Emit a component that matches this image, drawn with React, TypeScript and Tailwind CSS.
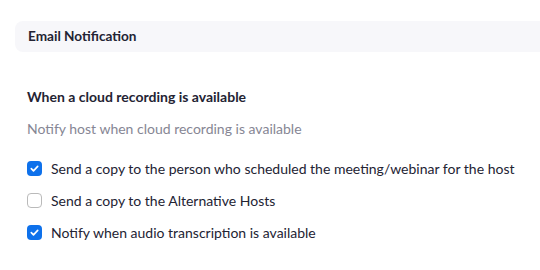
import React from "react";

type Option = { label: string; checked: boolean };

const OPTIONS: Option[] = [
  { label: "Send a copy to the person who scheduled the meeting/webinar for the host", checked: true },
  { label: "Send a copy to the Alternative Hosts", checked: false },
  { label: "Notify when audio transcription is available", checked: true },
];

function CheckBox({ checked }: { checked: boolean }) {
  if (!checked) {
    return <span className="h-[15px] w-[15px] shrink-0 rounded-[4px] border border-[#bababa] bg-white" />;
  }
  return (
    <span className="flex h-[15px] w-[15px] shrink-0 items-center justify-center rounded-[4px] bg-[#0e71eb]">
      <svg width="11" height="11" viewBox="0 0 12 12" fill="none">
        <path d="M2.5 6.2l2.4 2.4 4.6-4.9" stroke="white" strokeWidth="1.8" strokeLinecap="round" strokeLinejoin="round" />
      </svg>
    </span>
  );
}

export default function App() {
  return (
    <div className="h-[270px] w-[540px] overflow-hidden bg-white pt-[21px] text-[#232333]" style={{ fontFamily: "Lato, 'Open Sans', sans-serif" }}>
      {/* section header */}
      <div className="ml-[15px] flex h-[31px] items-center rounded-l-[8px] bg-[#f7f7fa] pl-[13px] text-[13.6px] font-bold">
        Email Notification
      </div>

      <div className="pl-[27px]">
        <h3 className="mt-[35px] text-[14px] font-bold leading-[20px]">When a cloud recording is available</h3>
        <p className="mt-[12px] text-[14px] leading-[20px] text-[#868694]">Notify host when cloud recording is available</p>

        <div className="mt-[22px] flex flex-col gap-[17px]">
          {OPTIONS.map((o) => (
            <label key={o.label} className="flex h-[15px] items-center gap-[9px] text-[14px] leading-[15px]">
              <CheckBox checked={o.checked} />
              <span>{o.label}</span>
            </label>
          ))}
        </div>
      </div>
    </div>
  );
}
